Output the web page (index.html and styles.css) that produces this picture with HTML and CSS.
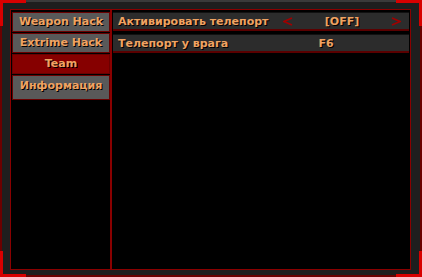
FILE: index.html
```html
<!DOCTYPE html>
<html>
<head>
<meta charset="utf-8">
<link rel="stylesheet" href="styles.css">
</head>
<body>
<div class="frame">
  <span class="corner tl"></span>
  <span class="corner tr"></span>
  <span class="corner bl"></span>
  <span class="corner br"></span>
  <div class="panel">
    <div class="menu">
      <div class="tab">Weapon Hack</div>
      <div class="tab">Extrime Hack</div>
      <div class="tab active">Team</div>
      <div class="tab tall">Информация</div>
    </div>
    <div class="content">
      <div class="row first">
        <span class="label">Активировать телепорт</span>
        <svg class="arrow" width="10" height="9" viewBox="0 0 10 9"><polyline points="9,1 1,4.5 9,8" fill="none" stroke="#a00000" stroke-width="1.5"/></svg>
        <span class="value">[OFF]</span>
        <svg class="arrow" width="10" height="9" viewBox="0 0 10 9"><polyline points="1,1 9,4.5 1,8" fill="none" stroke="#a00000" stroke-width="1.5"/></svg>
      </div>
      <div class="row">
        <span class="label">Телепорт у врага</span>
        <span class="key">F6</span>
      </div>
    </div>
  </div>
</div>
</body>
</html>
```
FILE: styles.css
```css
* { box-sizing: border-box; }
html, body { margin: 0; padding: 0; background: #000; }
.frame {
  position: relative;
  width: 422px;
  height: 277px;
  background: #1e1e1e;
  border-left: 2px solid #6a0000;
  border-right: 2px solid #6a0000;
  border-top: 2px solid #3a3a3a;
  border-bottom: 2px solid #6a0000;
  padding: 7px 9px 5px 8px;
  font-family: "DejaVu Sans", Verdana, sans-serif;
  font-weight: bold;
  font-size: 11px;
  color: #f0a362;
}
.corner { position: absolute; width: 26px; height: 26px; border-color: #d80000; border-style: solid; border-width: 0; }
.corner.tl { left: -2px; top: -2px; border-left-width: 3px; border-top-width: 3px; }
.corner.tr { right: -2px; top: -2px; border-right-width: 3px; border-top-width: 3px; }
.corner.bl { left: -2px; bottom: -2px; border-left-width: 3px; border-bottom-width: 3px; }
.corner.br { right: -2px; bottom: -2px; border-right-width: 3px; border-bottom-width: 3px; }
.panel {
  height: 100%;
  display: flex;
  border: 1px solid #8a0000;
  background: #000;
}
.menu {
  width: 101px;
  border-right: 2px solid #8a0000;
  padding: 2px 0 0 1px;
  display: flex;
  flex-direction: column;
  gap: 1px;
}
.tab {
  height: 20px;
  background: #595959;
  border: 1px solid #6a0000;
  text-align: center;
  line-height: 17px;
  text-shadow: 1px 1px 0 #000;
}
.tab.active { background: #860000; }
.tab.tall { height: 25px; line-height: 19px; }
.content {
  flex: 1;
  padding: 2px 1px 0 1px;
  display: flex;
  flex-direction: column;
  gap: 3px;
}
.row {
  height: 19px;
  background: #2c2c2c;
  border-top: 1px solid #111;
  border-bottom: 2px solid #5a0000;
  display: flex;
  align-items: center;
  padding-left: 5px;
  text-shadow: 1px 1px 0 #000;
}
.row .label { width: 165px; }
.row .arrow { display: block; }
.row .value { width: 98px; text-align: center; }
.row .key { width: 50px; text-align: center; margin-left: 18px; }
```
